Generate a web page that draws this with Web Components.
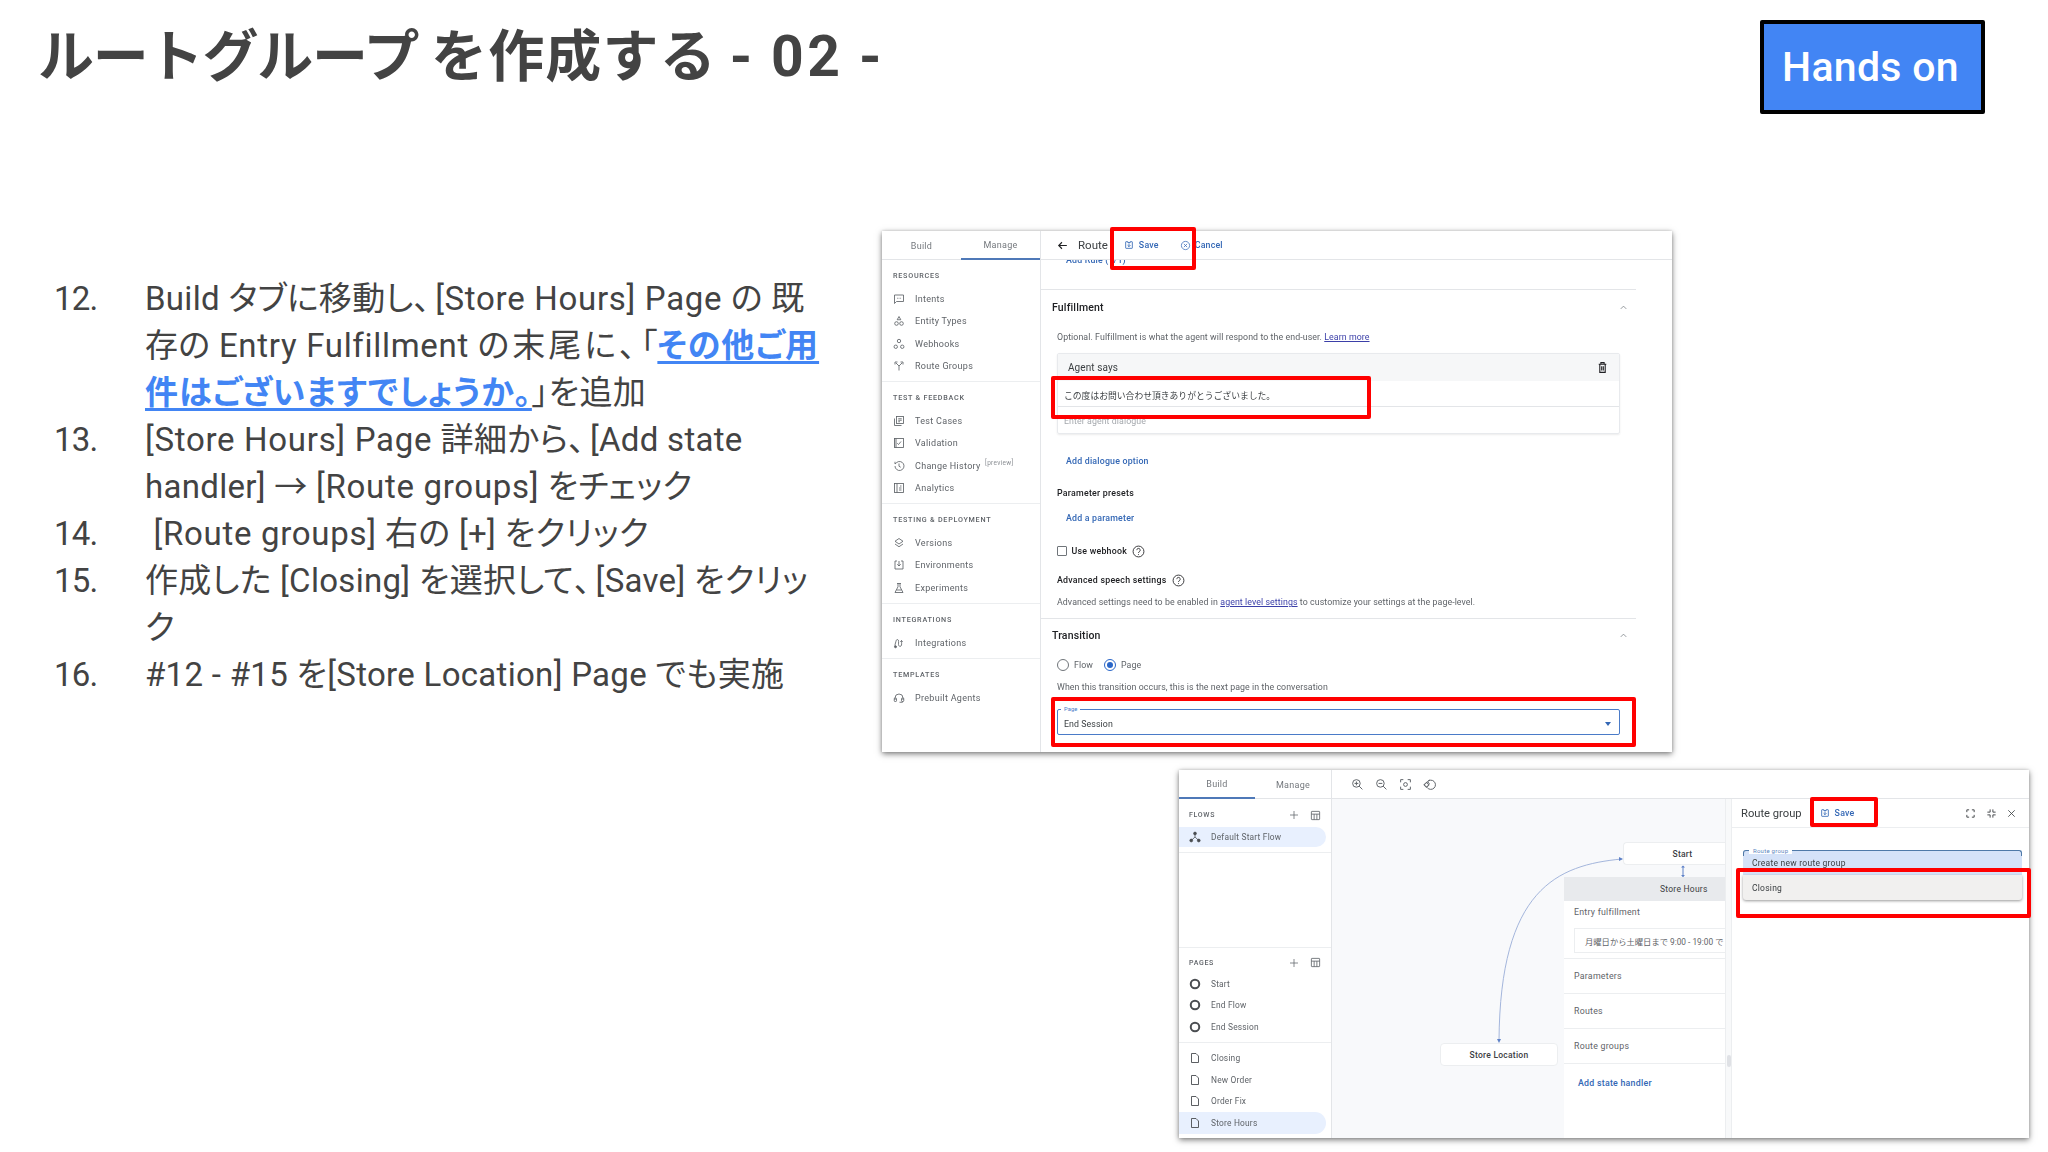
<!DOCTYPE html>
<html lang="ja">
<head>
<meta charset="utf-8">
<title>ルートグループ を作成する - 02 -</title>
<style>
html,body{margin:0;padding:0;background:#fff}
</style>
</head>
<body>
<slide-page>
  <slide-title slot="title">ルートグループ <em>を作成する</em> <span>- 02 -</span></slide-title>
  <hands-on-badge slot="badge">Hands on</hands-on-badge>
  <step-list slot="steps">
    <step-item num="12.">Build タブに移動し<i>、</i><b>[Store Hours] Page</b> の 既<br>存の <b>Entry Fulfillment</b> <s>の末尾に</s><i>、</i>「<a>その他ご用<br>件はございますでしょうか。</a>」を追加</step-item>
    <step-item num="13."><b>[Store Hours] Page</b> 詳細から<i>、</i>[Add state<br>handler] → <b>[Route groups]</b> をチェック</step-item>
    <step-item num="14.">&nbsp;<b>[Route groups]</b> 右の [+] をクリック</step-item>
    <step-item num="15.">作成した [Closing] を選択して<i>、</i>[Save] をクリッ<br>ク</step-item>
    <step-item num="16.">#12 - #15 を[Store Location] Page でも実施</step-item>
  </step-list>
  <manage-shot slot="shots"></manage-shot>
  <build-shot slot="shots"></build-shot>
</slide-page>

<script>
const UI_FONT = 'Roboto,"Noto Sans CJK JP",sans-serif';

const ICONS = {
  back:'<path d="M20 12H5M11 6l-6 6 6 6"/>',
  save:'<path d="M4 5a1 1 0 0 1 1-1h4v2h6V4h4a1 1 0 0 1 1 1v14a1 1 0 0 1-1 1H5a1 1 0 0 1-1-1z"/><path d="M12 8v8M8.5 12.5 12 16l3.5-3.5"/>',
  cancel:'<circle cx="12" cy="12" r="9"/><path d="M8.5 8.5l7 7M15.5 8.5l-7 7"/>',
  help:'<circle cx="12" cy="12" r="10"/><path d="M8.8 9.5a3.2 3.2 0 1 1 4.8 2.8c-1 .6-1.6 1.2-1.6 2.4M12 17v1.5"/>',
  trash:'<path d="M5 6h14M9 6V3h6v3M7 6h10v15H7zM10.5 9.5v8M13.5 9.5v8"/>',
  up:'<path d="M6 15l6-6 6 6"/>',
  intents:'<path d="M3 4h18v13H7l-4 4z"/><path d="M8 10.5h1.5M11.3 10.5h1.5M14.6 10.5h1.5"/>',
  entity:'<path d="M12 3l3.6 6.5H8.4z"/><circle cx="7" cy="17" r="3.6"/><circle cx="17" cy="17" r="3.6"/>',
  webhook:'<circle cx="12" cy="6" r="3.4"/><circle cx="5.5" cy="17.5" r="3.4"/><circle cx="18.5" cy="17.5" r="3.4"/>',
  route:'<path d="M12 21v-9M12 12 6 6M12 12l6-6M4 9V4h5M15 4h5v5"/>',
  tests:'<rect x="7" y="3" width="14" height="14"/><path d="M3 7v14h14M10.5 7.5h7M10.5 10.5h7M10.5 13.5h3.5"/>',
  valid:'<rect x="3" y="3" width="18" height="18"/><path d="M8.5 12.5l2.5 2.5 5-6"/><path d="M3 3h5v18H3z" fill="currentColor" stroke="none" opacity=".45"/>',
  history:'<path d="M4 12a9 9 0 1 0 3-6.7L4 8V3.5M12 7v5.5l3.5 2"/>',
  analytics:'<rect x="3" y="3" width="18" height="18"/><path d="M8 3v18M12 16h5M14 8h3M12 12h5"/>',
  versions:'<path d="M12 3l8 5.5-8 5.5-8-5.5z"/><path d="M4 14l8 5.5 8-5.5"/>',
  env:'<path d="M8 4H4v16h16V4h-4"/><path d="M12 4v10M8.5 10.5 12 14l3.5-3.5"/>',
  flask:'<path d="M8 3h8M10 3v6.5L4 21h16L14 9.5V3M7 16h10"/>',
  integ:'<path d="M6 20c-3-1-2-5-1-8s1-7 4-7 2 7 2 10 3 5 5 3 1-6 1-11M17 7l-2.5 2.5M17 7l2.5 2.5"/><circle cx="5" cy="19.5" r="2" fill="currentColor"/>',
  agents:'<path d="M4 16v-4a8 8 0 0 1 16 0v4"/><rect x="2.5" y="12" width="4.5" height="7" rx="1.5"/><rect x="17" y="12" width="4.5" height="7" rx="1.5"/><path d="M19 19v1.5h-6"/>',
  zoomin:'<circle cx="10" cy="10" r="7"/><path d="M15 15l6 6M10 6.5v7M6.5 10h7"/>',
  zoomout:'<circle cx="10" cy="10" r="7"/><path d="M15 15l6 6M6.5 10h7"/>',
  focus:'<path d="M3 8V3h5M16 3h5v5M21 16v5h-5M8 21H3v-5"/><circle cx="12" cy="12" r="3.5"/>',
  rotate:'<path d="M8 7a8.5 8.5 0 1 1 0 11"/><path d="M12 3.5 8.5 7l3.5 3.5"/><rect x="3.3" y="9.3" width="6.5" height="6.5" transform="rotate(45 6.5 12.5)"/>',
  plus:'<path d="M4 12h16M12 4v16"/>',
  table:'<rect x="3" y="3" width="18" height="18" rx="1"/><path d="M3 9h18M9 9v12M15 9v12"/>',
  flow:'<circle cx="12" cy="5" r="2.8" fill="currentColor"/><circle cx="4.5" cy="19" r="2.8" fill="currentColor"/><circle cx="19.5" cy="19" r="2.8" fill="currentColor"/><path d="M12 5v7L4.5 19M12 12l7.5 7"/>',
  ring:'<circle cx="12" cy="12" r="8.5" stroke-width="4"/>',
  doc:'<path d="M5 3h9l5 5v13H5z"/>',
  full:'<path d="M4 9V4h5M15 4h5v5M20 15v5h-5M9 20H4v-5"/>',
  shrink:'<path d="M9 3v6H3M15 3v6h6M21 15h-6v6M9 21v-6H3"/>',
  close:'<path d="M5 5l14 14M19 5 5 19"/>'
};

function shadowOf(el, html){
  const t = document.createElement('template');
  t.innerHTML = html;
  el.attachShadow({mode:'open'}).appendChild(t.content.cloneNode(true));
}

customElements.define('ui-icon', class extends HTMLElement{
  connectedCallback(){
    if(this.shadowRoot) return;
    const s = this.getAttribute('size') || 12;
    const w = this.getAttribute('w') || 2;
    shadowOf(this, `<style>:host{display:inline-flex;flex:none;width:${s}px;height:${s}px;color:inherit}svg{display:block;width:100%;height:100%}</style>
    <svg viewBox="0 0 24 24" fill="none" stroke="currentColor" stroke-width="${w}">${ICONS[this.getAttribute('name')]||''}</svg>`);
  }
});

customElements.define('slide-page', class extends HTMLElement{
  constructor(){super();shadowOf(this,`<style>
    :host{display:flex;flex-direction:column;width:2048px;height:1152px;overflow:hidden;background:#fff;font-family:${UI_FONT};color:#434343}
    header{display:flex;justify-content:space-between;align-items:flex-start;height:231px;box-sizing:border-box;padding:20px 63px 0 38px}
    main{display:flex;align-items:flex-start}
    .left{width:882px;flex:none;box-sizing:border-box;padding:44px 0 0 54px}
    .right{display:flex;flex-direction:column;gap:18px}
  </style>
  <header><slot name="title"></slot><slot name="badge"></slot></header>
  <main><div class="left"><slot name="steps"></slot></div><div class="right"><slot name="shots"></slot></div></main>`);}
});

customElements.define('slide-title', class extends HTMLElement{
  constructor(){super();shadowOf(this,`<style>
    :host{display:block;margin-top:5px;font:700 56px/64px ${UI_FONT};letter-spacing:-1.2px;color:#434343;white-space:nowrap}
    ::slotted(em){font-style:normal;letter-spacing:1.2px}
    ::slotted(span){letter-spacing:3.4px;word-spacing:-2px;font-size:57px}
  </style><slot></slot>`);}
});

customElements.define('hands-on-badge', class extends HTMLElement{
  constructor(){super();shadowOf(this,`<style>
    :host{display:flex;align-items:center;justify-content:center;width:225px;height:94px;box-sizing:border-box;border:4px solid #000;border-radius:2px;padding-right:4px;background:#4285f4;color:#fff;font:500 41px/1 ${UI_FONT};letter-spacing:.3px}
  </style><slot></slot>`);}
});

customElements.define('step-list', class extends HTMLElement{
  constructor(){super();shadowOf(this,`<style>
    :host{display:block;font:400 33px/47px ${UI_FONT};color:#434343;letter-spacing:.3px;font-feature-settings:"palt"}
  </style><slot></slot>`);}
});

customElements.define('step-item', class extends HTMLElement{
  constructor(){super();shadowOf(this,`<style>
    :host{display:flex;white-space:nowrap}
    .n{width:91px;flex:none;letter-spacing:-.8px}
    ::slotted(a){color:#4285f4;font-weight:700;text-decoration:underline;text-underline-offset:4px;letter-spacing:1px}
    ::slotted(i){font-style:normal;letter-spacing:5px}
    ::slotted(b){font-weight:400;letter-spacing:.7px}
    ::slotted(s){text-decoration:none;letter-spacing:3px}
  </style><span class="n"></span><span class="t"><slot></slot></span>`);
    this.shadowRoot.querySelector('.n').textContent=this.getAttribute('num');}
});

customElements.define('mark-box', class extends HTMLElement{
  constructor(){super();shadowOf(this,`<style>
    :host{position:absolute;box-sizing:border-box;border:4px solid #f00;border-radius:2px;z-index:5;pointer-events:none}
  </style>`);}
  connectedCallback(){
    const [x,y,w,h]=this.getAttribute('box').split(' ');
    Object.assign(this.style,{left:x+'px',top:y+'px',width:w+'px',height:h+'px'});
  }
});

customElements.define('shot-frame', class extends HTMLElement{
  constructor(){super();shadowOf(this,`<style>
    :host{display:flex;position:relative;background:#fff;box-shadow:0 2px 6px rgba(0,0,0,.5),0 0 3px rgba(0,0,0,.15);font-family:${UI_FONT};color:#5f6368;letter-spacing:.25px}
  </style><slot></slot>`);}
  connectedCallback(){
    this.style.width=this.getAttribute('w')+'px';
    this.style.height=this.getAttribute('h')+'px';
  }
});

customElements.define('tab-bar', class extends HTMLElement{
  constructor(){super();shadowOf(this,`<style>
    :host{display:flex;height:29px;box-sizing:border-box;border-bottom:1px solid #e3e5e8;font-size:9px;color:#74787d;flex:none}
    span{flex:1;display:flex;align-items:center;justify-content:center;margin-bottom:-1px}
    .on{border-bottom:2px solid #4f79b8}
  </style><span class="a">Build</span><span class="b">Manage</span>`);}
  connectedCallback(){
    this.shadowRoot.querySelector(this.getAttribute('active')==='build'?'.a':'.b').classList.add('on');
  }
});

customElements.define('nav-section', class extends HTMLElement{
  constructor(){super();shadowOf(this,`<style>
    :host{display:block;padding:4px 0;border-bottom:1px solid #eceef0}
    :host([last]){border-bottom:0}
    .l{height:24px;line-height:24px;padding-left:11px;font-size:7.2px;letter-spacing:.75px;color:#5f6368;font-weight:500}
  </style><div class="l"></div><slot></slot>`);}
  connectedCallback(){this.shadowRoot.querySelector('.l').textContent=this.getAttribute('label');}
});

customElements.define('nav-item', class extends HTMLElement{
  constructor(){super();shadowOf(this,`<style>
    :host{display:flex;align-items:center;height:22.25px;padding-left:11px;font-size:9px;letter-spacing:.3px;color:#5f6368;white-space:nowrap}
    ui-icon{margin-right:10px}
  </style><span class="holder"></span><slot></slot>`);}
  connectedCallback(){
    const holder=this.shadowRoot.querySelector('.holder');
    if(!holder) return;
    const fresh=document.createElement('ui-icon');
    fresh.setAttribute('name',this.getAttribute('icon'));
    fresh.setAttribute('size','12');
    fresh.setAttribute('w','1.7');
    holder.replaceWith(fresh);
  }
});

customElements.define('manage-shot', class extends HTMLElement{
  constructor(){super();shadowOf(this,`<style>
    :host{display:block;filter:blur(.35px)}
    .side{width:159px;flex:none;border-right:1px solid #e3e5e8;box-sizing:border-box;height:100%}
    .side sup{font-size:6.5px;color:#8b8f94;margin-left:2px;position:relative;top:-3px;vertical-align:baseline}
    .pane{width:631px;flex:none;font-size:8.8px;color:#5f6368;overflow:hidden;height:100%;letter-spacing:.08px}
    .top{display:flex;align-items:center;height:29px;box-sizing:border-box;border-bottom:1px solid #e3e5e8;position:relative;color:#3c4043}
    .top ui-icon{color:#202124}
    .ttl{font-size:11.5px;margin-left:9px;letter-spacing:0}
    .blue{color:#3367b5;font-weight:500;letter-spacing:.2px}
    .peek{height:30px;width:595px;box-sizing:border-box;border-bottom:1px solid #e3e5e8;overflow:hidden;padding-left:25px}
    .peek span{display:block;margin-top:-6px;line-height:12px}
    .r{display:flex;align-items:center;white-space:nowrap;padding-left:16px;box-sizing:border-box}
    .link{padding-left:25px}
    .strong{color:#202124;font-weight:500;letter-spacing:.25px}
    .sec{width:595px;justify-content:space-between;padding:0 7px 2px 11px;font-size:10.5px;font-weight:500;color:#202124;letter-spacing:.15px}
    .sec ui-icon{color:#80868b}
    u{color:#3b3fa8}
    .card{margin:5px 0 0 16px;width:563px;height:81px;border:1px solid #e8eaed;box-sizing:border-box;border-radius:2px;box-shadow:0 1px 2px rgba(0,0,0,.08)}
    .ch{display:flex;justify-content:space-between;align-items:center;height:27px;background:#f6f7f8;padding:0 10px;color:#3c4043;font-size:10px}
    .ch ui-icon{color:#202124}
    .c1{height:26px;border-bottom:1px solid #e3e5e8;padding:5px 0 0 6px;box-sizing:border-box;line-height:21px;color:#3c4043;letter-spacing:0}
    .c2{height:26px;padding-left:6px;line-height:29px;color:#a5a9ae}
    .box{width:9.5px;height:9.5px;border:1.2px solid #70757a;border-radius:1px;box-sizing:border-box;margin-right:5px;flex:none}
    .dot{width:12px;height:12px;border:1.2px solid #70757a;border-radius:50%;box-sizing:border-box;margin-right:5px;flex:none}
    .dot.on{border-color:#2a66c8;margin-left:11px;position:relative}
    .dot.on::after{content:"";position:absolute;inset:2px;border-radius:50%;background:#2a66c8}
    .field{position:relative;margin:0 0 0 16px;width:563px;height:26px;box-sizing:border-box;border:1px solid #4a7bc8;border-radius:2px;display:flex;align-items:center;justify-content:space-between;padding:3px 8px 0 6px;color:#3c4043}
    .legend{position:absolute;left:3px;top:-4px;padding:0 3px;background:#fff;font-size:5.8px;line-height:7px;color:#4a7bc8}
    .arrow{width:0;height:0;border:3px solid transparent;border-top:4px solid #3367b5;border-bottom:0}
  </style>
  <shot-frame w="790" h="521">
    <div class="side">
      <tab-bar active="manage"></tab-bar>
      <nav-section label="RESOURCES">
        <nav-item icon="intents">Intents</nav-item>
        <nav-item icon="entity">Entity Types</nav-item>
        <nav-item icon="webhook">Webhooks</nav-item>
        <nav-item icon="route">Route Groups</nav-item>
      </nav-section>
      <nav-section label="TEST &amp; FEEDBACK">
        <nav-item icon="tests">Test Cases</nav-item>
        <nav-item icon="valid">Validation</nav-item>
        <nav-item icon="history">Change History&nbsp;<sup>[preview]</sup></nav-item>
        <nav-item icon="analytics">Analytics</nav-item>
      </nav-section>
      <nav-section label="TESTING &amp; DEPLOYMENT">
        <nav-item icon="versions">Versions</nav-item>
        <nav-item icon="env">Environments</nav-item>
        <nav-item icon="flask">Experiments</nav-item>
      </nav-section>
      <nav-section label="INTEGRATIONS">
        <nav-item icon="integ">Integrations</nav-item>
      </nav-section>
      <nav-section label="TEMPLATES" last>
        <nav-item icon="agents">Prebuilt Agents</nav-item>
      </nav-section>
    </div>
    <div class="pane">
      <div class="top">
        <ui-icon name="back" size="13" style="margin-left:15px"></ui-icon>
        <span class="ttl">Route</span>
        <ui-icon name="save" size="10" w="2" style="margin-left:16px;color:#3367b5"></ui-icon>
        <span class="blue" style="margin-left:5px">Save</span>
        <ui-icon name="cancel" size="11" w="1.6" style="margin-left:21px;color:#3367b5"></ui-icon>
        <span class="blue" style="margin-left:4px">Cancel</span>
      </div>
      <div class="peek blue"><span>Add Rule (1/1)</span></div>
      <div class="r sec" style="height:36px">Fulfillment<ui-icon name="up" size="11" w="1.8"></ui-icon></div>
      <div class="r" style="height:22px">Optional. Fulfillment is what the agent will respond to the end-user.&nbsp;<u>Learn more</u></div>
      <div class="card">
        <div class="ch">Agent says<ui-icon name="trash" size="13" w="2"></ui-icon></div>
        <div class="c1">この度はお問い合わせ頂きありがとうございました。</div>
        <div class="c2">Enter agent dialogue</div>
      </div>
      <div class="r blue link" style="height:26px;margin-top:14px">Add dialogue option</div>
      <div class="r strong" style="height:18px;margin-top:10px">Parameter presets</div>
      <div class="r blue link" style="height:18px;margin-top:7px">Add a parameter</div>
      <div class="r strong" style="height:18px;margin-top:15px"><span class="box"></span>Use webhook<ui-icon name="help" size="13" w="1.6" style="margin-left:5px"></ui-icon></div>
      <div class="r strong" style="height:18px;margin-top:11px">Advanced speech settings<ui-icon name="help" size="13" w="1.6" style="margin-left:5px"></ui-icon></div>
      <div class="r" style="height:18px;margin-top:4px;width:595px">Advanced settings need to be enabled in&nbsp;<u>agent level settings</u>&nbsp;to customize your settings at the page-level.</div>
      <div style="width:595px;height:7px;border-bottom:1px solid #e3e5e8"></div>
      <div class="r sec" style="height:34px">Transition<ui-icon name="up" size="11" w="1.8"></ui-icon></div>
      <div class="r" style="height:18px;margin-top:3px"><span class="dot"></span>Flow<span class="dot on"></span>Page</div>
      <div class="r" style="height:18px;margin-top:4px">When this transition occurs, this is the next page in the conversation</div>
      <div class="field" style="margin-top:13px"><span class="legend">Page</span>End Session<span class="arrow"></span></div>
    </div>
    <mark-box box="228 -4 86 43"></mark-box>
    <mark-box box="169 145 320 43"></mark-box>
    <mark-box box="169 466 585 50"></mark-box>
  </shot-frame>`);}
});

customElements.define('build-shot', class extends HTMLElement{
  constructor(){super();shadowOf(this,`<style>
    :host{display:block;margin-left:297px;filter:blur(.35px)}
    .col{display:flex;flex-direction:column;width:100%;height:100%}
    .body{display:flex;flex:1;min-height:0}
    .side{width:153px;flex:none;border-right:1px solid #e3e5e8;box-sizing:border-box;font-size:8.4px;letter-spacing:.2px;color:#5f6368}
    .bar{display:flex;flex:none;height:29px;box-sizing:border-box;border-bottom:1px solid #e3e5e8}
    .bar tab-bar{width:153px;border-right:1px solid #e3e5e8;box-sizing:border-box}
    .tools{display:flex;align-items:center;padding-left:19px;gap:11px;color:#5f6368}
    .sh{display:flex;align-items:center;height:26px;padding:0 10px;font-size:7px;letter-spacing:.7px;font-weight:500}
    .sh b{flex:1;font-weight:500}
    .sh ui-icon{margin-left:10px}
    .it{display:flex;align-items:center;height:21.5px;padding-left:10px;gap:10px;white-space:nowrap;margin-right:5px}
    .it ui-icon{color:#4a4d51}
    .it.sel{background:#e8f0fe;border-radius:0 11px 11px 0}
    .d{border-top:1px solid #eceef0}
    .canvas{position:relative;width:393px;flex:none;background:#f8f9fb;overflow:hidden}
    .strip{width:7px;flex:none;background:#f8f9fa;border-left:1px solid #eceef0;border-right:1px solid #eceef0;box-sizing:border-box;position:relative}
    .thumb{position:absolute;left:1px;top:256px;width:4px;height:12px;background:#dfe1e5;border-radius:2px}
    .node{position:absolute;background:#fff;box-sizing:border-box;font-size:8.5px;color:#3c4043;font-weight:500;display:flex;align-items:center;justify-content:center;height:23px}
    .store{left:108px;top:244px;width:118px;border:1px solid #eceef0;border-radius:4px}
    .start{left:291px;top:43px;width:102px;border:1px solid #eceef0;border-right:0;border-radius:4px 0 0 4px;padding-left:16px}
    svg.wire{position:absolute;left:0;top:0;width:393px;height:340px;overflow:visible}
    .detail{position:absolute;left:232px;top:78px;width:161px;height:262px;background:#fff;color:#5f6368;font-size:8.8px}
    .dh{display:flex;align-items:center;height:24px;background:#e8eaed;color:#3c4043;font-size:8.5px;padding-left:96px}
    .dr{display:flex;align-items:center;padding-left:10px;white-space:nowrap;box-sizing:border-box}
    .bx{margin-left:10px;width:151px;height:25px;box-sizing:border-box;border:1px solid #eceef0;border-right:0;display:flex;align-items:center;padding-left:10px;font-size:8.3px;overflow:hidden;white-space:nowrap;letter-spacing:0}
    .ln{border-bottom:1px solid #eceef0}
    .blue{color:#3367b5;font-weight:500}
    .panel{flex:1;position:relative;color:#3c4043}
    .ph{display:flex;align-items:center;height:29px;box-sizing:border-box;border-bottom:1px solid #eceef0;padding-left:9px;font-size:11.2px;letter-spacing:0;color:#3c4043}
    .ph .s{color:#3367b5;font-weight:500;font-size:8.8px;letter-spacing:.2px}
    .rg{position:relative;margin:22px 0 0 11px;width:279px;font-size:8.5px;color:#3c4043}
    .rgl{position:absolute;left:0;top:0;right:0;height:6px;border:1px solid #4f79a8;border-bottom:0;border-radius:3px 3px 0 0;box-sizing:border-box;z-index:1}
    .rgt{position:absolute;left:6px;top:-3px;padding:0 4px;background:#fff;font-size:6px;line-height:7px;color:#5b85c0;z-index:2}
    .o1{height:25px;margin-top:3px;background:#d5e2f8;display:flex;align-items:center;padding-left:9px;border-radius:3px 3px 0 0}
    .o2{height:25px;background:#f1f0ef;display:flex;align-items:center;padding-left:9px;border-radius:0 0 3px 3px;box-shadow:0 1px 3px rgba(0,0,0,.4)}
  </style>
  <shot-frame w="850" h="368">
    <div class="col">
      <div class="bar">
        <tab-bar active="build"></tab-bar>
        <div class="tools">
          <ui-icon name="zoomin" size="13" w="1.8"></ui-icon>
          <ui-icon name="zoomout" size="13" w="1.8"></ui-icon>
          <ui-icon name="focus" size="13" w="1.8"></ui-icon>
          <ui-icon name="rotate" size="13" w="1.8"></ui-icon>
        </div>
      </div>
      <div class="body">
        <div class="side">
          <div class="sh" style="height:28px;padding-top:4px;box-sizing:border-box"><b>FLOWS</b><ui-icon name="plus" size="12" w="1.5"></ui-icon><ui-icon name="table" size="11" w="1.8"></ui-icon></div>
          <div class="it sel" style="height:20px"><ui-icon name="flow" size="12" w="1.5"></ui-icon>Default Start Flow</div>
          <div class="d" style="margin-top:5px;height:94px"></div>
          <div class="d"></div>
          <div class="sh" style="height:25px;box-sizing:border-box;padding-top:4px"><b>PAGES</b><ui-icon name="plus" size="12" w="1.5"></ui-icon><ui-icon name="table" size="11" w="1.8"></ui-icon></div>
          <div class="it"><ui-icon name="ring" size="12"></ui-icon>Start</div>
          <div class="it"><ui-icon name="ring" size="12"></ui-icon>End Flow</div>
          <div class="it"><ui-icon name="ring" size="12"></ui-icon>End Session</div>
          <div class="d" style="margin-top:4px;height:5px"></div>
          <div class="it"><ui-icon name="doc" size="12" w="1.8"></ui-icon>Closing</div>
          <div class="it"><ui-icon name="doc" size="12" w="1.8"></ui-icon>New Order</div>
          <div class="it"><ui-icon name="doc" size="12" w="1.8"></ui-icon>Order Fix</div>
          <div class="it sel"><ui-icon name="doc" size="12" w="1.8"></ui-icon>Store Hours</div>
        </div>
        <div class="canvas">
          <svg class="wire" viewBox="0 0 393 340" fill="none">
            <path d="M290 60C225 66 168 90 167 242" stroke="#a4b6dc" stroke-width="1"/>
            <path d="M287 58l4 2-4 2zM165 240h4l-2 4z" fill="#5f82c8"/>
            <path d="M351 67v11" stroke="#5f82c8" stroke-width="1"/>
            <path d="M349 68.5l2-2 2 2zM349 76l2 2 2-2z" fill="#5f82c8"/>
          </svg>
          <div class="node store">Store Location</div>
          <div class="node start">Start</div>
          <div class="detail">
            <div class="dh">Store Hours</div>
            <div class="dr" style="height:22px">Entry fulfillment</div>
            <div class="bx" style="margin-top:5px">月曜日から土曜日まで 9:00 - 19:00 で</div>
            <div class="ln" style="height:5px"></div>
            <div class="dr ln" style="height:35px">Parameters</div>
            <div class="dr ln" style="height:35px">Routes</div>
            <div class="dr ln" style="height:35px">Route groups</div>
            <div class="dr blue" style="height:38px;padding-left:14px">Add state handler</div>
          </div>
        </div>
        <div class="strip"><span class="thumb"></span></div>
        <div class="panel">
          <div class="ph">Route group
            <ui-icon name="save" size="10" w="2" style="margin-left:18px;color:#3367b5"></ui-icon>
            <span class="s" style="margin-left:5px">Save</span>
            <ui-icon name="full" size="11" w="2" style="margin-left:111px"></ui-icon>
            <ui-icon name="shrink" size="11" w="2" style="margin-left:10px"></ui-icon>
            <ui-icon name="close" size="11" w="1.8" style="margin-left:9px"></ui-icon>
          </div>
          <div class="rg">
            <span class="rgl"></span><span class="rgt">Route group</span>
            <div class="o1">Create new route group</div>
            <div class="o2">Closing</div>
          </div>
        </div>
      </div>
    </div>
    <mark-box box="631 27 68 30"></mark-box>
    <mark-box box="557 98 295 50"></mark-box>
  </shot-frame>`);}
});
</script>
</body>
</html>
